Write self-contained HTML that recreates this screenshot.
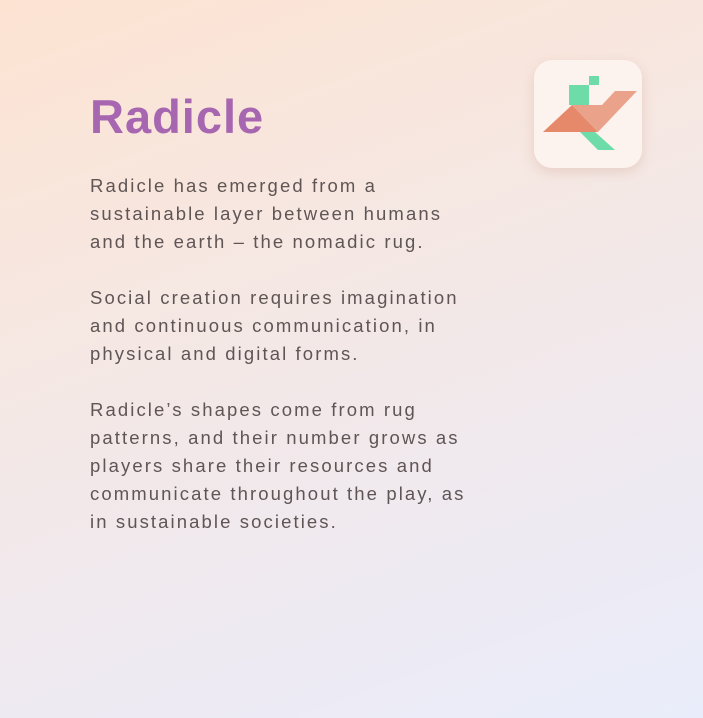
<!DOCTYPE html>
<html><head><style>
html,body{margin:0;padding:0}
body{width:703px;height:718px;overflow:hidden;position:relative;
background:linear-gradient(160deg,#fde3d2 0%,#f5e8e4 40%,#efe9f0 70%,#e9edfb 100%);
font-family:"Liberation Sans",sans-serif}
h1{position:absolute;left:90px;top:87px;margin:0;font-size:47px;font-weight:bold;color:#a766b0;letter-spacing:1px;line-height:60px}
.t{position:absolute;left:90px;top:172px;font-size:18.5px;line-height:28px;color:#5f5555;letter-spacing:2.1px;white-space:nowrap}
.t p{margin:0 0 28px 0}
.icon{position:absolute;left:534px;top:60px;width:108px;height:108px;border-radius:18px;background:#fdf3ee;box-shadow:0 4px 12px rgba(200,150,130,0.3)}
</style></head><body>
<h1>Radicle</h1>
<div class="t">
<p>Radicle has emerged from a<br>sustainable layer between humans<br>and the earth – the nomadic rug.</p>
<p>Social creation requires imagination<br>and continuous communication, in<br>physical and digital forms.</p>
<p>Radicle’s shapes come from rug<br>patterns, and their number grows as<br>players share their resources and<br>communicate throughout the play, as<br>in sustainable societies.</p>
</div>
<div class="icon"></div>
<svg style="position:absolute;left:0;top:0" width="703" height="718">
<rect x="589" y="76" width="10" height="9" fill="#6edca8"/>
<rect x="569" y="85" width="20" height="20" fill="#6edca8"/>
<polygon points="580,132 595,132 615,150 598,150" fill="#6edca8"/>
<polygon points="572,105 602,105 615,91 637,91 598,132" fill="#eba28a"/>
<polygon points="543,132 572,105 598,132" fill="#e6896a"/>
</svg>
</body></html>
